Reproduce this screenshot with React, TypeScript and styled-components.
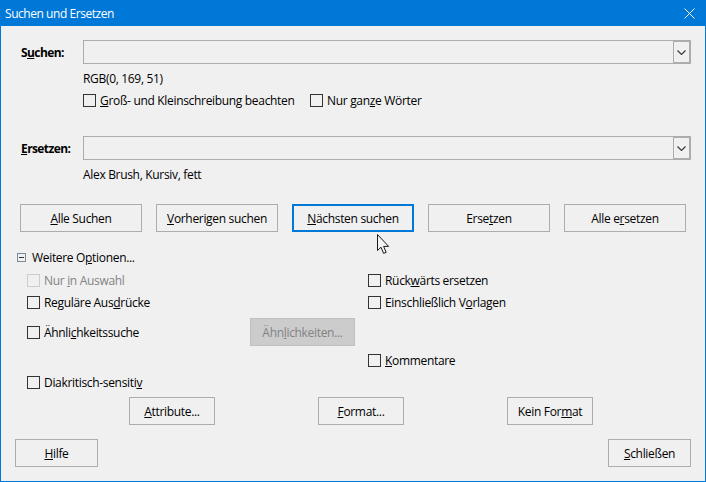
import styled, { createGlobalStyle } from 'styled-components';

const GlobalStyle = createGlobalStyle`
    * { box-sizing: border-box; }
    html, body { margin: 0; padding: 0; background: #f0f0f0; }
    body { font-family: "Open Sans", "Noto Sans", sans-serif; font-size: 12px; letter-spacing: -0.32px; color: #000; }
`;

const Frame = styled.div`
    position: relative;
    width: 706px;
    height: 482px;
    border: 1px solid #0078d7;
    background: #f0f0f0;
    overflow: hidden;
`;

const TitleBar = styled.div`
    height: 25px;
    background: #0078d7;
    color: #fff;
    display: flex;
    align-items: center;
    justify-content: space-between;
    padding: 0 10px 0 4px;
    font-size: 12px;
    letter-spacing: -0.45px;
`;

const FormRow = styled.div<{ $top: number }>`
    display: flex;
    align-items: center;
    margin-top: ${(p) => p.$top}px;
    padding: 0 14px 0 20px;
`;

const FieldLabel = styled.label`
    width: 62px;
    font-weight: 700;
    font-size: 12px;
    letter-spacing: -0.6px;
`;

const Combo = styled.div`
    flex: 1;
    height: 24px;
    display: flex;
    justify-content: flex-end;
    border: 1px solid #adadad;
    background: #f0f0f0;
`;

const ComboArrow = styled.div`
    width: 18px;
    margin: -1px -1px -1px 0;
    display: flex;
    align-items: center;
    justify-content: center;
    border: 2px solid #adadad;
    border-left-width: 1px;
    background: #f0f0f0;
`;

const Hint = styled.div`
    height: 16px;
    line-height: 16px;
    margin-top: 7px;
    padding-left: 82px;
`;

const CheckRow = styled.div`
    display: flex;
    height: 16px;
    margin-top: 5px;
    padding-left: 82px;
`;

const CheckLabel = styled.label<{ $width?: number; $disabled?: boolean }>`
    display: flex;
    align-items: center;
    gap: 4px;
    width: ${(p) => (p.$width ? `${p.$width}px` : 'auto')};
    white-space: nowrap;
    color: ${(p) => (p.$disabled ? '#838383' : '#000')};
`;

const Box = styled.span<{ $disabled?: boolean }>`
    flex: none;
    width: 13px;
    height: 13px;
    border: 1px solid ${(p) => (p.$disabled ? '#cccccc' : '#333333')};
`;

const SearchButtons = styled.div`
    display: flex;
    gap: 14px;
    margin-top: 21px;
    padding-left: 19px;
`;

const Button = styled.button<{ $width: number; $focused?: boolean }>`
    width: ${(p) => p.$width}px;
    height: 28px;
    padding: 0;
    background: #f0f0f0;
    border: ${(p) => (p.$focused ? '2px solid #0078d7' : '1px solid #adadad')};
    border-radius: 0;
    color: #000;
    font: inherit;
    letter-spacing: inherit;
    white-space: nowrap;
    &:disabled {
        background: #cccccc;
        border-color: #bfbfbf;
        color: #838383;
    }
`;

const Expander = styled.div`
    display: flex;
    align-items: center;
    gap: 6px;
    height: 16px;
    margin-top: 17px;
    padding-left: 16px;
`;

const ExpanderBox = styled.span`
    width: 9px;
    height: 9px;
    border: 1px solid #7a8a99;
    display: flex;
    align-items: center;
    justify-content: center;
    &::before {
        content: '';
        width: 5px;
        height: 1px;
        background: #333;
    }
`;

const OptionGrid = styled.div`
    display: grid;
    grid-template-columns: 341px 1fr;
    grid-template-rows: 18px 26px 34px 22px 22px;
    align-items: center;
    margin-top: 6px;
    padding-left: 26px;
`;

const OptionPair = styled.div`
    display: flex;
    align-items: center;
`;

const Spacer = styled.div``;

const FormatButtons = styled.div`
    display: flex;
    gap: 103px;
    margin-top: 4px;
    padding-left: 128px;
`;

const Footer = styled.div`
    display: flex;
    justify-content: space-between;
    margin-top: 14px;
    padding: 0 14px;
`;

const Pointer = styled.svg`
    position: absolute;
    left: 376px;
    top: 233px;
`;

const Check = ({ label, width, disabled }: { label: React.ReactNode; width?: number; disabled?: boolean }) => (
    <CheckLabel $width={width} $disabled={disabled}>
        <Box $disabled={disabled} />
        <span>{label}</span>
    </CheckLabel>
);

const Chevron = () => (
    <svg width="9" height="5" viewBox="0 0 9 5" fill="none">
        <path d="M0.5 0.5 L4.5 4.5 L8.5 0.5" stroke="#333" strokeWidth="1.1" />
    </svg>
);

export default function App() {
    return (
        <>
            <GlobalStyle />
            <Frame>
                <TitleBar>
                    <span>Suchen und Ersetzen</span>
                    <svg width="11" height="11" viewBox="0 0 11 11" fill="none">
                        <path d="M0.5 0.5 L10.5 10.5 M10.5 0.5 L0.5 10.5" stroke="#fff" strokeWidth="1" />
                    </svg>
                </TitleBar>

                <FormRow $top={14}>
                    <FieldLabel>S<u>u</u>chen:</FieldLabel>
                    <Combo><ComboArrow><Chevron /></ComboArrow></Combo>
                </FormRow>
                <Hint>RGB(0, 169, 51)</Hint>
                <CheckRow>
                    <Check width={227} label={<><u>G</u>roß- und Kleinschreibung beachten</>} />
                    <Check label={<>Nur gan<u>z</u>e Wörter</>} />
                </CheckRow>

                <FormRow $top={28}>
                    <FieldLabel><u>E</u>rsetzen:</FieldLabel>
                    <Combo><ComboArrow><Chevron /></ComboArrow></Combo>
                </FormRow>
                <Hint>Alex Brush, Kursiv, fett</Hint>

                <SearchButtons>
                    <Button $width={122}><u>A</u>lle Suchen</Button>
                    <Button $width={122}><u>V</u>orherigen suchen</Button>
                    <Button $width={122} $focused><u>N</u>ächsten suchen</Button>
                    <Button $width={122}>Erse<u>t</u>zen</Button>
                    <Button $width={122}>Alle e<u>r</u>setzen</Button>
                </SearchButtons>

                <Expander>
                    <ExpanderBox />
                    <span>Weitere O<u>p</u>tionen...</span>
                </Expander>

                <OptionGrid>
                    <Check disabled label={<>Nur <u>i</u>n Auswahl</>} />
                    <Check label={<>Rück<u>w</u>ärts ersetzen</>} />
                    <Check label={<>Reguläre Aus<u>d</u>rücke</>} />
                    <Check label={<>Einschließlich V<u>o</u>rlagen</>} />
                    <OptionPair>
                        <Check width={223} label={<>Ähnli<u>c</u>hkeitssuche</>} />
                        <Button $width={105} disabled>Ähn<u>l</u>ichkeiten...</Button>
                    </OptionPair>
                    <Spacer />
                    <Spacer />
                    <Check label={<><u>K</u>ommentare</>} />
                    <Check label={<>Diakritisch-sensiti<u>v</u></>} />
                    <Spacer />
                </OptionGrid>

                <FormatButtons>
                    <Button $width={86}><u>A</u>ttribute...</Button>
                    <Button $width={86}><u>F</u>ormat...</Button>
                    <Button $width={86}>Kein For<u>m</u>at</Button>
                </FormatButtons>

                <Footer>
                    <Button $width={83}><u>H</u>ilfe</Button>
                    <Button $width={83}><u>S</u>chließen</Button>
                </Footer>

                <Pointer width="14" height="21" viewBox="0 0 14 21">
                    <path d="M0.5 0.5 V16.5 L4 13.2 L6.6 19.4 L9.2 18.3 L6.6 12.4 H11.6 Z" fill="#f4f4f4" stroke="#1a1a1a" strokeWidth="1" />
                </Pointer>
            </Frame>
        </>
    );
}
